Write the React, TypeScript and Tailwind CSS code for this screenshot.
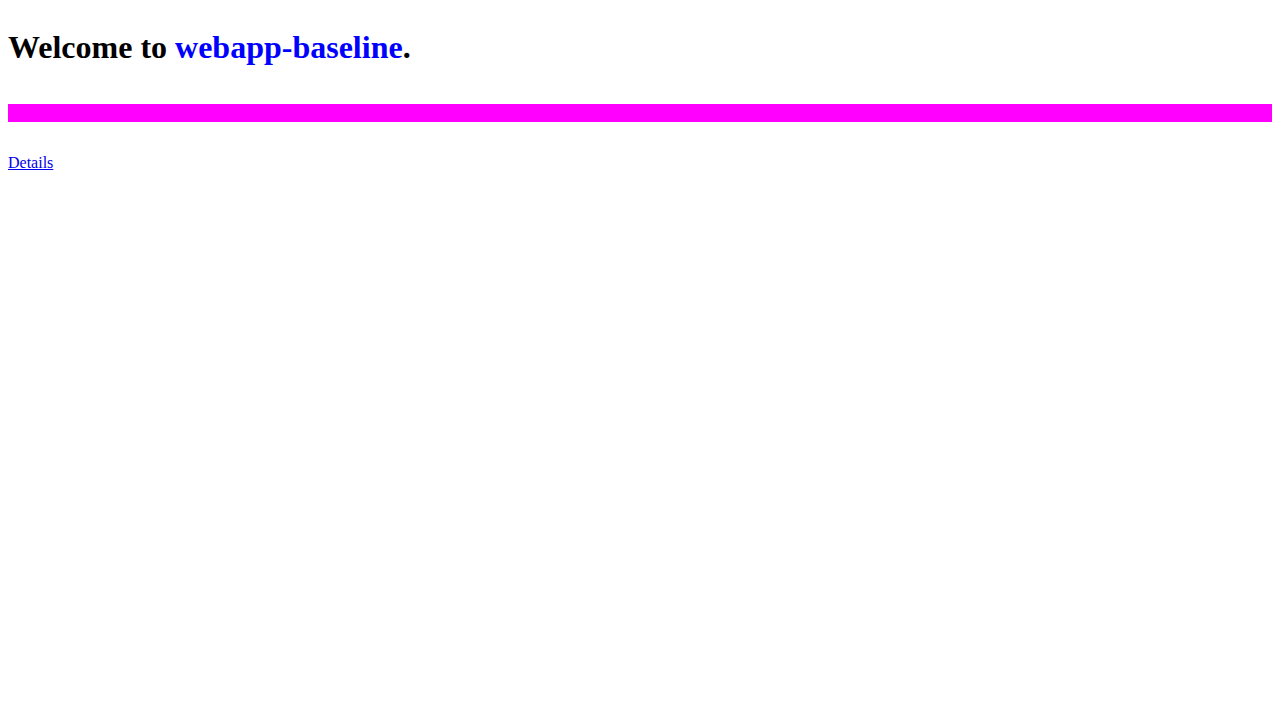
export default function App() {
  return (
    <div
      className="flex flex-col p-2 bg-white text-black"
      style={{ fontFamily: '"Liberation Serif", "Times New Roman", serif' }}
    >
      <h1 className="mt-[21.44px] mb-[21.44px] text-[32px] font-bold leading-[normal]">
        Welcome to <span className="text-[#0000ff]">webapp-baseline</span>.
      </h1>
      <div className="mt-4 mb-4 h-[18px] bg-[#ff00ff]" />
      <p className="mt-4 mb-4 text-[16px] leading-[normal]">
        <a href="#" className="text-[#0000ee] underline">
          Details
        </a>
      </p>
    </div>
  );
}
